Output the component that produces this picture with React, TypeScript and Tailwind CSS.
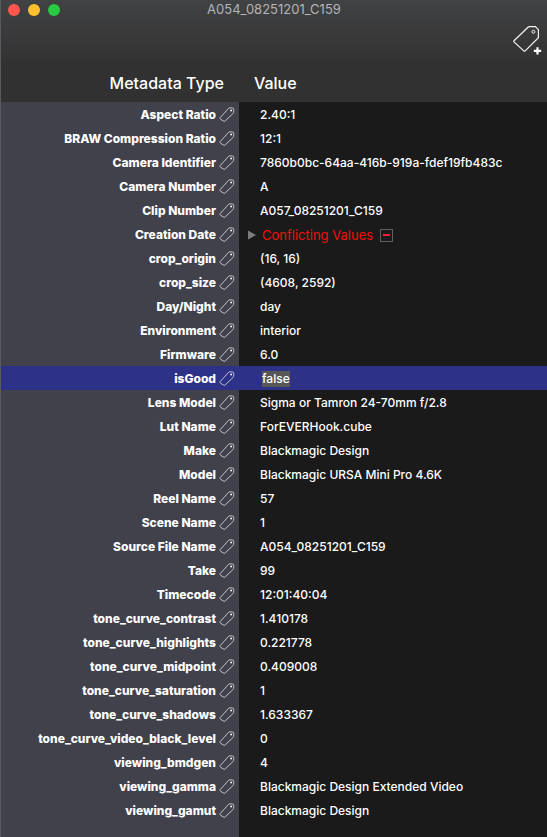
import { useState } from "react";

type Entry = { name: string; value: string; conflict?: boolean };

const entries: Entry[] = [
  { name: "Aspect Ratio", value: "2.40:1" },
  { name: "BRAW Compression Ratio", value: "12:1" },
  { name: "Camera Identifier", value: "7860b0bc-64aa-416b-919a-fdef19fb483c" },
  { name: "Camera Number", value: "A" },
  { name: "Clip Number", value: "A057_08251201_C159" },
  { name: "Creation Date", value: "Conflicting Values", conflict: true },
  { name: "crop_origin", value: "(16, 16)" },
  { name: "crop_size", value: "(4608, 2592)" },
  { name: "Day/Night", value: "day" },
  { name: "Environment", value: "interior" },
  { name: "Firmware", value: "6.0" },
  { name: "isGood", value: "false" },
  { name: "Lens Model", value: "Sigma or Tamron 24-70mm f/2.8" },
  { name: "Lut Name", value: "ForEVERHook.cube" },
  { name: "Make", value: "Blackmagic Design" },
  { name: "Model", value: "Blackmagic URSA Mini Pro 4.6K" },
  { name: "Reel Name", value: "57" },
  { name: "Scene Name", value: "1" },
  { name: "Source File Name", value: "A054_08251201_C159" },
  { name: "Take", value: "99" },
  { name: "Timecode", value: "12:01:40:04" },
  { name: "tone_curve_contrast", value: "1.410178" },
  { name: "tone_curve_highlights", value: "0.221778" },
  { name: "tone_curve_midpoint", value: "0.409008" },
  { name: "tone_curve_saturation", value: "1" },
  { name: "tone_curve_shadows", value: "1.633367" },
  { name: "tone_curve_video_black_level", value: "0" },
  { name: "viewing_bmdgen", value: "4" },
  { name: "viewing_gamma", value: "Blackmagic Design Extended Video" },
  { name: "viewing_gamut", value: "Blackmagic Design" },
];

function TagIcon() {
  return (
    <svg className="h-4 w-4 shrink-0" viewBox="0 0 16 16" fill="none" stroke="#d2d2d6" strokeLinejoin="round" aria-hidden="true">
      <path d="M1.2 10.6 9.3 1.6Q9.9 0.9 10.8 0.9H13.2Q14.7 0.9 14.7 2.4V4.9Q14.7 5.7 14.1 6.4L6.1 14Q5.3 14.8 4.4 14L1.4 12.1Q0.6 11.4 1.2 10.6Z" strokeWidth="0.9" />
      <circle cx="12.1" cy="3.5" r="0.9" fill="#ffffff" stroke="none" />
    </svg>
  );
}

function AddTagIcon() {
  return (
    <svg className="h-8 w-8" viewBox="0 0 32 32" fill="none" aria-hidden="true">
      <path d="M3 16.8 17 3.3Q17.6 2.7 18.5 2.7H24.4L27.4 5.7V13.7L14.2 26.9Q13.5 27.6 12.8 26.9L3 17.9Q2.4 17.4 3 16.8Z" stroke="#f4f4f4" strokeWidth="1.2" />
      <circle cx="22.4" cy="7.8" r="1.5" stroke="#f4f4f4" strokeWidth="1" />
      <path d="M26.5 23.2V30.6M22.8 26.9H30.2" stroke="#ffffff" strokeWidth="2.2" />
    </svg>
  );
}

function ConflictValue({ text }: { text: string }) {
  const [open, setOpen] = useState(false);
  return (
    <div className="flex items-center">
      <button type="button" aria-label="Show conflicting values" aria-expanded={open} onClick={() => setOpen(!open)} className="-ml-3 mr-1 flex w-2 justify-center">
        <svg className="h-2.5 w-2" viewBox="0 0 8 10" aria-hidden="true">
          <path d="M0 0.5 8 5 0 9.5Z" fill="#7d7d7d" />
        </svg>
      </button>
      <span className="ml-0.5 text-[13px] font-normal text-[#f0100b]">{text}</span>
      <button type="button" aria-label="Remove value" className="ml-[7px] flex h-[13px] w-[13px] items-center justify-center border border-[#606060]">
        <span className="h-0.5 w-[7px] bg-[#f0203c]" />
      </button>
    </div>
  );
}

export default function App() {
  const [selected, setSelected] = useState("isGood");
  const [flag, setFlag] = useState("false");

  return (
    <div className="flex min-h-screen flex-col border-l border-[#595960] bg-[#1a1a1a] font-['Inter','Liberation_Sans',sans-serif] text-white">
      <header className="bg-linear-to-b from-[#414243] to-[#333334]">
        <div className="grid h-[18px] grid-cols-[1fr_auto_1fr] items-center px-[7px]">
          <div className="flex gap-2">
            <button type="button" aria-label="Close" className="h-3 w-3 rounded-full bg-[#ff5650]" />
            <button type="button" aria-label="Minimize" className="h-3 w-3 rounded-full bg-[#ffbf2f]" />
            <button type="button" aria-label="Zoom" className="h-3 w-3 rounded-full bg-[#28cb42]" />
          </div>
          <h1 className="text-[13px] text-[#b4b4b5]">A054_08251201_C159</h1>
        </div>
        <div className="flex h-11 items-center justify-end pr-1">
          <button type="button" aria-label="Add metadata tag">
            <AddTagIcon />
          </button>
        </div>
      </header>

      <table className="w-full table-fixed border-collapse text-[12px] leading-4">
        <colgroup>
          <col className="w-[238px]" />
          <col />
        </colgroup>
        <thead>
          <tr className="h-10 bg-[#313131] text-[16px] leading-5">
            <th scope="col" className="p-0 pt-0.5 pr-[15px] text-right font-medium">Metadata Type</th>
            <th scope="col" className="p-0 pt-0.5 pl-[15px] text-left font-medium">Value</th>
          </tr>
        </thead>
        <tbody>
          {entries.map((entry) => {
            const active = entry.name === selected;
            return (
              <tr key={entry.name} onClick={() => setSelected(entry.name)} className={active ? "h-6 bg-[#2d3288]" : "h-6"}>
                <th scope="row" className={active ? "p-0 pt-0.5 pr-1 font-extrabold" : "bg-[#41414b] p-0 pt-0.5 pr-1 font-extrabold"}>
                  <div className="flex items-center justify-end gap-[3px]">
                    <span>{entry.name}</span>
                    <TagIcon />
                  </div>
                </th>
                <td className="p-0 pt-0.5 pl-[21px] font-medium">
                  {entry.conflict ? (
                    <ConflictValue text={entry.value} />
                  ) : entry.name === "isGood" ? (
                    <input
                      aria-label="isGood"
                      value={flag}
                      onChange={(event) => setFlag(event.target.value)}
                      className="ml-0.5 block h-4 field-sizing-content bg-[#575757] outline-none"
                    />
                  ) : (
                    entry.value
                  )}
                </td>
              </tr>
            );
          })}
        </tbody>
      </table>
      <div className="w-[238px] grow bg-[#41414b]" />
    </div>
  );
}
